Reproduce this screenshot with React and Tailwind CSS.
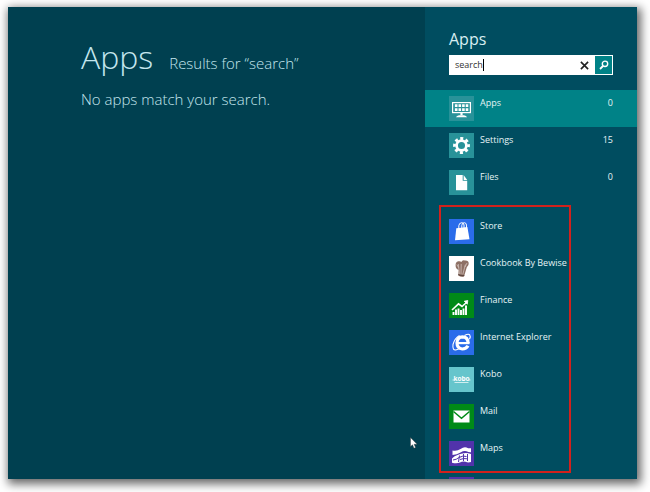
import React, { useState } from 'react';

const AppsIcon = () => (
    <svg viewBox="0 0 25 25" className="w-full h-full" fill="none" stroke="white">
        <rect x="3.6" y="6.6" width="17.8" height="10" strokeWidth="1.2" />
        <path d="M5.9 9.7h13.4M5.9 13.6h13.4" strokeWidth="2.8" strokeDasharray="2.6 1" />
        <path d="M12.5 16.8v2.5" strokeWidth="2.2" />
        <path d="M7 21.3q.5-1.7 3-2h5q2.5.3 3 2z" fill="white" stroke="none" />
    </svg>
);

const SettingsIcon = () => (
    <svg viewBox="0 0 25 25" className="w-full h-full" fill="none" stroke="white">
        <circle cx="12.5" cy="12.5" r="4.9" strokeWidth="2.7" />
        <circle cx="12.5" cy="12.5" r="7" strokeWidth="2.8" strokeDasharray="3 2.498" strokeDashoffset="1.5" />
    </svg>
);

const FilesIcon = () => (
    <svg viewBox="0 0 25 25" className="w-full h-full" fill="white">
        <path d="M7 5h6.7v5.8h4.5v9.4H7z" />
        <path d="M14.6 5l3.600 4.900h-3.600z" />
    </svg>
);

const StoreIcon = () => (
    <svg viewBox="0 0 25 25" className="w-full h-full">
        <path d="M7.300 9.200L18.400 8l2.100 12.200L6 21.200z" fill="white" />
        <path d="M9.800 10V6.700q.3-2.900 3-3 2 0 2.200 2.300v3M12.800 9V6.300q.3-2.500 2.500-2.600 2 .1 2.200 2.400V9" fill="none" stroke="white" strokeWidth="1" />
    </svg>
);

const CookbookIcon = () => (
    <svg viewBox="0 0 25 25" className="w-full h-full">
        <path d="M9.3 19.5L9.600 14Q6.500 12.500 6.600 9.500 6.300 6 9.300 5.300q2-.5 3 .7Q13.500 3.500 16 4.600q3.500-.3 3.700 2.700.3 2.200-1.900 3.900L15 20.500Q12 21.500 9.300 19.500z" fill="#8d7065" />
        <path d="M10.500 18.500L9.300 8M12 18.500l.2-10.500M13.800 18.500l2.600-10M7.800 8.500l1.800 3M18 7l-2 4" stroke="#dccfc8" strokeWidth=".7" fill="none" />
        <path d="M9.3 18.500q3 1.500 6 1" stroke="#5e463e" strokeWidth="1.2" fill="none" />
    </svg>
);

const FinanceIcon = () => (
    <svg viewBox="0 0 25 25" className="w-full h-full" stroke="white" fill="none">
        <path d="M4.500 22v-3M7 22v-5.500M9.500 22v-6.500M12 22v-5M14.500 22v-6.500M17 22v-9.500" strokeWidth="1.9" />
        <path d="M3 17l6.500-6.200 3.500 2.700 5-4.500" strokeWidth="1.6" />
        <path d="M15.2 8.200l3.600-.7-.5 3.700z" fill="white" strokeWidth=".8" />
    </svg>
);

const ExplorerIcon = () => (
    <svg viewBox="0 0 25 25" className="w-full h-full" fill="none" stroke="white">
        <path d="M19 15.700Q17.200 19 13.300 19 8 18.600 8 12.800 8.200 7 13.500 6.900 19 7 19.100 13.300" strokeWidth="3.200" />
        <path d="M9 13.100h11.500" strokeWidth="2.200" />
        <path d="M10.500 5.500Q5.500 8.500 4 14.500q-.8 6.500 3.500 5.300 1.500-.4 3-1.300M15.500 5.500q4-2 5.200-.7 1.200 1.500-.2 4.500" strokeWidth="1.100" />
    </svg>
);

const KoboIcon = () => (
    <svg viewBox="0 0 25 25" className="w-full h-full">
        <text x="12.5" y="14" textAnchor="middle" fontSize="6.5" fontWeight="700" fill="white">kobo</text>
        <path d="M3.500 13h2M19.500 13h2M5.500 15.500h14" stroke="white" strokeWidth=".7" />
    </svg>
);

const MailIcon = () => (
    <svg viewBox="0 0 25 25" className="w-full h-full">
        <path d="M4.500 6.500h16v12h-16z" fill="white" />
        <path d="M4.500 7.500l8 6.700 8-6.700" fill="none" stroke="#008a17" strokeWidth="1.5" />
    </svg>
);

const MapsIcon = () => (
    <svg viewBox="0 0 25 25" className="w-full h-full" fill="none" stroke="white">
        <path d="M3.500 9.500q4.500 1 8-1.500 3.500-2.500 6-1.500 2.500 1.200 4.500.7v4q-2 .3-4.500-.9-2.500-.9-6 1.200-3.500 2.200-8 2.500z" fill="white" stroke="none" />
        <path d="M3 17.500q2.500-3 5.500-3.500 3-1.500 5-1.500 4-1 8.500.5v8q-3 1-5.500-.3-3-.7-5.500.8-3.500 1.500-8 .2z" fill="white" stroke="none" />
        <path d="M4 19q3.500-.3 6-2.500 4-2.300 7.500-1M10.500 14.500l-1 6.500M14.500 13v7M18.500 13v7M11 18.500q3.500-1.500 7.500-.7" stroke="#5133ab" strokeWidth="1" />
    </svg>
);

const scopes = [
    { name: 'Apps', count: 0, icon: AppsIcon },
    { name: 'Settings', count: 15, icon: SettingsIcon },
    { name: 'Files', count: 0, icon: FilesIcon },
];

const apps = [
    { name: 'Store', icon: StoreIcon, color: 'bg-[#2a6cea]' },
    { name: 'Cookbook By Bewise', icon: CookbookIcon, color: 'bg-white' },
    { name: 'Finance', icon: FinanceIcon, color: 'bg-[#008a17]' },
    { name: 'Internet Explorer', icon: ExplorerIcon, color: 'bg-[#2a6cea]' },
    { name: 'Kobo', icon: KoboIcon, color: 'bg-[#66c5cc]' },
    { name: 'Mail', icon: MailIcon, color: 'bg-[#008a17]' },
    { name: 'Maps', icon: MapsIcon, color: 'bg-[#5133ab]' },
];

const Tile = ({ icon: Icon, color }) => (
    <span className={`w-[25px] h-[25px] shrink-0 ${color}`}>
        <Icon />
    </span>
);

const App = () => {
    const [query, setQuery] = useState('search');
    const [scope, setScope] = useState('Apps');

    return (
        <div className="h-screen bg-white pt-[7px] pl-2 pr-[13px] pb-[13px] font-['Open_Sans',sans-serif] text-white">
            <div className="relative flex h-full overflow-hidden bg-[#004050] shadow-[2px_3px_9px_2px_rgba(0,0,0,0.6)]">
                {/* Results */}
                <main className="flex-1 min-w-0 pt-[26px] pl-[73px] font-light text-[#c4e6ee]">
                    <div className="flex items-baseline gap-4">
                        <h1 className="text-[32px] leading-[48px]">{scope}</h1>
                        <p className="text-[15px]">Results for “{query}”</p>
                    </div>
                    <p className="mt-1.5 text-[15px] leading-6">No apps match your search.</p>
                </main>

                {/* Search charm */}
                <aside className="w-[212px] shrink-0 bg-[#004d60] pt-5">
                    <h2 className="pl-6 text-base leading-6 text-[#d8eef2]">{scope}</h2>

                    <form className="mt-1 ml-6 mr-6 h-5 flex items-center bg-white" onSubmit={(e) => e.preventDefault()}>
                        <div className="flex-1 flex items-center pl-1.5">
                            <input
                                type="text"
                                aria-label="Search"
                                className="field-sizing-content text-[9px] leading-4 text-[#333] caret-transparent outline-none"
                                value={query}
                                onChange={(e) => setQuery(e.target.value)}
                            />
                            <span className="w-px h-3 bg-black" />
                        </div>
                        <button type="button" aria-label="Clear" className="w-5 h-5 flex items-center justify-center" onClick={() => setQuery('')}>
                            <svg viewBox="0 0 10 10" className="w-[9px] h-[9px]" stroke="#222" strokeWidth="1.8">
                                <path d="M1 1l8 8M9 1l-8 8" />
                            </svg>
                        </button>
                        <button type="submit" aria-label="Submit search" className="w-[19px] h-5 border border-white bg-[#008287] flex items-center justify-center">
                            <svg viewBox="0 0 12 12" className="w-3 h-3" fill="none" stroke="white">
                                <circle cx="7" cy="4.8" r="2.7" strokeWidth="1.4" />
                                <path d="M5 7l-3 3" strokeWidth="1.8" />
                            </svg>
                        </button>
                    </form>

                    <div className="mt-[15px]">
                        {scopes.map((item) => (
                            <button
                                key={item.name}
                                type="button"
                                onClick={() => setScope(item.name)}
                                className={`w-full h-[37px] flex items-start gap-1.5 py-1.5 px-6 text-left text-[9px] leading-[14px] text-[#e6f4f6] ${
                                    scope === item.name ? 'bg-[#008287]' : ''
                                }`}
                            >
                                <Tile icon={item.icon} color="bg-[#289299]" />
                                <span className="flex-1">{item.name}</span>
                                <span>{item.count}</span>
                            </button>
                        ))}
                    </div>

                    {/* Searchable apps */}
                    <div className="mt-1 ml-3.5 w-[132px] border-2 border-[#d3211c] pt-3 pb-[5px] pl-2 flex flex-col gap-3">
                        {apps.map((app) => (
                            <button key={app.name} type="button" className="flex items-start gap-1.5 text-left text-[9px] leading-[14px] text-[#e6f4f6] whitespace-nowrap">
                                <Tile icon={app.icon} color={app.color} />
                                <span>{app.name}</span>
                            </button>
                        ))}
                    </div>
                    <div className="mt-1 ml-6 w-[25px] h-[25px] bg-[#5133ab]" />
                </aside>

                {/* Mouse pointer */}
                <svg viewBox="0 0 8 12" className="absolute left-[402px] top-[430px] w-2 h-3">
                    <path d="M.5.5v9l2-1.7 1.5 3.5 1.6-.7-1.5-3.3h3z" fill="white" stroke="#333" strokeWidth=".4" />
                </svg>
            </div>
        </div>
    );
};

export default App;
